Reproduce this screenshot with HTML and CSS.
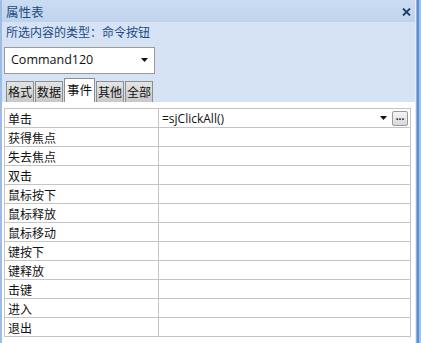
FILE: index.html
```html
<!DOCTYPE html>
<html>
<head lang="zh">
    <meta charset="UTF-8">
    <title>属性表</title>
    <link rel="stylesheet" href="styles.css">
</head>
<body>
<div class="window">
    <div class="edge-l"></div>
    <div class="main">
        <div class="titlebar">
            <span>属性表</span>
            <svg class="close" width="9" height="8" viewBox="0 0 9 8"><path d="M1 0.5 L8 7.5 M8 0.5 L1 7.5" stroke="#1f3b66" stroke-width="1.8"/></svg>
        </div>
        <div class="subtitle">所选内容的类型：命令按钮</div>
        <div class="combo">
            <span>Command120</span>
            <svg width="7" height="4" viewBox="0 0 7 4"><path d="M0 0 H7 L3.5 4 Z" fill="#111"/></svg>
        </div>
        <div class="tabs">
            <div class="tab">格式</div>
            <div class="tab">数据</div>
            <div class="tab active">事件</div>
            <div class="tab">其他</div>
            <div class="tab">全部</div>
        </div>
        <div class="page">
            <table class="grid">
                <tr>
                    <td class="name">单击</td>
                    <td class="value">
                        <div class="val-row">
                            <span>=sjClickAll()</span>
                            <svg class="arrow" width="7" height="4" viewBox="0 0 7 4"><path d="M0 0 H7 L3.5 4 Z" fill="#111"/></svg>
                            <span class="dots">...</span>
                        </div>
                    </td>
                </tr>
                <tr><td class="name">获得焦点</td><td></td></tr>
                <tr><td class="name">失去焦点</td><td></td></tr>
                <tr><td class="name">双击</td><td></td></tr>
                <tr><td class="name">鼠标按下</td><td></td></tr>
                <tr><td class="name">鼠标释放</td><td></td></tr>
                <tr><td class="name">鼠标移动</td><td></td></tr>
                <tr><td class="name">键按下</td><td></td></tr>
                <tr><td class="name">键释放</td><td></td></tr>
                <tr><td class="name">击键</td><td></td></tr>
                <tr><td class="name">进入</td><td></td></tr>
                <tr><td class="name">退出</td><td></td></tr>
            </table>
        </div>
    </div>
    <div class="edge-r"></div>
</div>
</body>
</html>
```

FILE: styles.css
```css
*{
    padding:0;
    margin:0;
    box-sizing: border-box;
}
body{
    width:421px;
    height:343px;
    overflow:hidden;
    background:#d6e3f4;
    font-family: "Noto Sans CJK SC", sans-serif;
    font-size:12px;
}
.window{
    display:flex;
    height:343px;
}
.edge-l{
    width:2px;
    background:#9fbde4;
}
.edge-r{
    width:6px;
    background: linear-gradient(to right, #e4edf8 0, #e4edf8 1px, #8eb2e2 1px, #8eb2e2 2px, #5f8dcc 2px, #5f8dcc 4px, #a4c2ea 4px);
}
.main{
    flex:1;
    display:flex;
    flex-direction:column;
    background:#d6e3f4;
}
.titlebar{
    height:22px;
    display:flex;
    align-items:center;
    justify-content:space-between;
    padding:0 4px 0 4px;
    background: linear-gradient(#cadcf1, #bfd3ec);
    color:#1c4a86;
    font-size:12.5px;
}
.close{
    margin-top:2px;
}
.subtitle{
    height:20px;
    line-height:20px;
    padding-left:4px;
    color:#1c4a86;
}
.combo{
    margin:5px 0 0 2px;
    width:151px;
    height:27px;
    border:1px solid #9a9a9a;
    background:#fff;
    display:flex;
    align-items:center;
    justify-content:space-between;
    padding:0 6px 2px 6px;
    font-family:"Open Sans", sans-serif;
    font-size:12.5px;
    color:#111;
}
.tabs{
    display:flex;
    align-items:flex-end;
    height:28px;
    padding-left:4px;
    gap:1px;
}
.tab{
    height:21px;
    line-height:19px;
    padding:0 1px;
    border:1px solid #8e8e8e;
    border-bottom:none;
    background: linear-gradient(#e4e4e4, #c8c8c8);
    color:#111;
    font-size:12px;
}
.tab.active{
    height:24px;
    line-height:22px;
    background:#fff;
    padding:0 2px;
    font-size:12.5px;
}
.page{
    flex:1;
    background:#fff;
    padding:6px 3px 0 2px;
    margin-left:0;
}
.grid{
    width:407px;
    border-collapse:collapse;
    border:1px solid #b8b8b8;
}
.grid td{
    height:19px;
    border:1px solid #c4c4c4;
    padding:0 0 0 3px;
    color:#111;
    vertical-align:middle;
}
.grid td.name{
    width:154px;
}
.val-row{
    display:flex;
    align-items:center;
    font-family:"Open Sans", sans-serif;
    font-size:12px;
}
.val-row span:first-child{
    flex:1;
}
.arrow{
    margin-right:5px;
}
.dots{
    width:16px;
    height:15px;
    margin-right:2px;
    border:1px solid #9a9a9a;
    border-radius:2px;
    background: linear-gradient(#f6f6f6, #d8d8d8);
    font-size:10px;
    font-weight:bold;
    line-height:9px;
    text-align:center;
}
```
